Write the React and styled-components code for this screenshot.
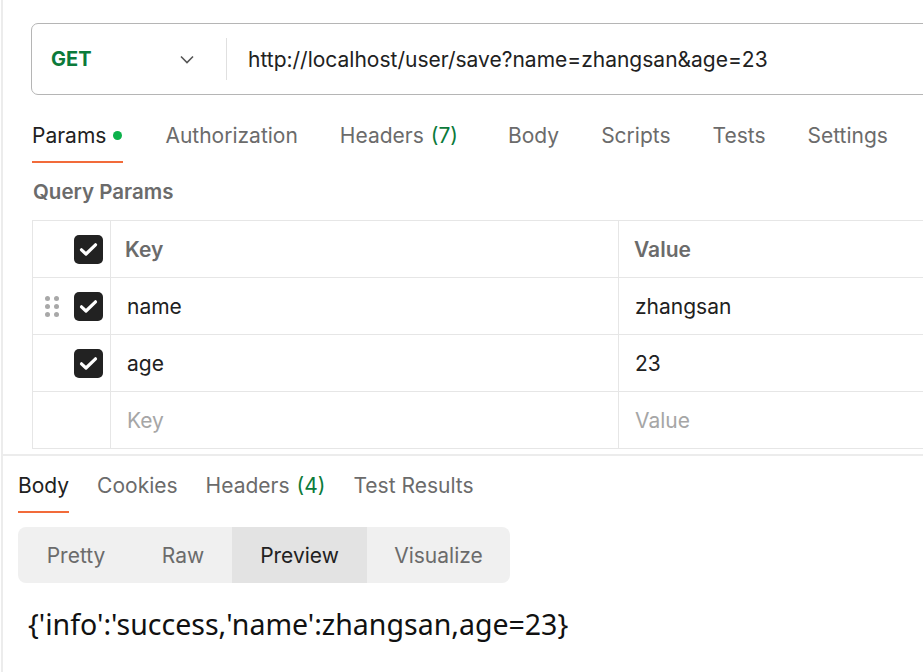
import React from "react";
import styled, { createGlobalStyle } from "styled-components";

const Global = createGlobalStyle`
  html, body { margin: 0; padding: 0; background: #fff; }
  body { font-family: Inter, "Noto Sans", sans-serif; -webkit-font-smoothing: antialiased; }
  * { box-sizing: border-box; }
`;

const Page = styled.div`
  width: 922px;
  height: 672px;
  margin-left: 1px;
  border-left: 2px solid #ececec;
  overflow: hidden;
  display: flex;
  flex-direction: column;
`;

const Request = styled.section`
  padding: 23px 0 0 28px;
  height: 454px;
  flex-shrink: 0;
  display: flex;
  flex-direction: column;
`;

const UrlBar = styled.div`
  width: 1000px;
  height: 72px;
  flex-shrink: 0;
  border: 1px solid #b5b5b5;
  border-radius: 7px;
  display: flex;
  align-items: center;
`;

const Method = styled.div`
  width: 194px;
  padding: 0 32px 0 19px;
  display: flex;
  align-items: center;
  justify-content: space-between;
  font-size: 20px;
  font-weight: 700;
  color: #0b7a3a;
`;

const Divider = styled.div`
  width: 1px;
  height: 42px;
  background: #e0e0e0;
`;

const Url = styled.div`
  padding-left: 21px;
  font-size: 21px;
  color: #212121;
`;

const Tabs = styled.div`
  display: flex;
  gap: ${(p) => p.$gap}px;
  margin-top: ${(p) => p.$top}px;
  margin-left: ${(p) => p.$left || 0}px;
`;

const Tab = styled.div`
  height: 54px;
  display: flex;
  align-items: center;
  gap: 7px;
  font-size: 21px;
  color: ${(p) => (p.$active ? "#212121" : "#6b6b6b")};
  border-bottom: 2px solid ${(p) => (p.$active ? "#f26b3a" : "transparent")};
  white-space: nowrap;
`;

const Count = styled.span`
  color: #0b7a3a;
`;

const Dot = styled.span`
  width: 9px;
  height: 9px;
  border-radius: 50%;
  background: #0cb14b;
  margin-right: 1px;
`;

const SectionTitle = styled.div`
  margin-top: 16px;
  margin-left: 2px;
  font-size: 20.5px;
  font-weight: 600;
  color: #6b6b6b;
  height: 24px;
  line-height: 24px;
`;

const Table = styled.div`
  margin-top: 16px;
  margin-left: 1px;
  width: 1000px;
  border-top: 1px solid #e6e6e6;
  border-left: 1px solid #e6e6e6;
`;

const Row = styled.div`
  display: grid;
  grid-template-columns: 78px 508px 1fr;
  height: 57px;
  border-bottom: 1px solid #e6e6e6;
`;

const Cell = styled.div`
  display: flex;
  align-items: center;
  padding-left: ${(p) => p.$pad || 0}px;
  font-size: 21px;
  font-weight: ${(p) => (p.$head ? 600 : 400)};
  color: ${(p) => (p.$head ? "#6b6b6b" : p.$muted ? "#a6a6a6" : "#212121")};
  border-right: ${(p) => (p.$last ? "none" : "1px solid #e6e6e6")};
`;

const CheckCell = styled(Cell)`
  justify-content: flex-end;
  padding-right: 7px;
  gap: 15px;
  padding-left: 0;
`;

const Box = styled.div`
  width: 29px;
  height: 29px;
  border-radius: 5px;
  background: #222;
  display: flex;
  align-items: center;
  justify-content: center;
`;

const Handle = styled.div`
  display: grid;
  grid-template-columns: 5px 5px;
  gap: 3px 4px;
`;

const HDot = styled.span`
  width: 5px;
  height: 5px;
  border-radius: 50%;
  background: #a8a8a8;
`;

const Sep = styled.div`
  height: 2px;
  flex-shrink: 0;
  background: #ececec;
`;

const Response = styled.section`
  padding: 3px 0 0 15px;
  display: flex;
  flex-direction: column;
`;

const Segments = styled.div`
  margin-top: 14px;
  display: flex;
  width: 492px;
  height: 56px;
  background: #f0f0f0;
  border-radius: 8px;
  overflow: hidden;
`;

const Segment = styled.div`
  display: flex;
  align-items: center;
  justify-content: center;
  width: ${(p) => p.$w}px;
  font-size: 21px;
  color: ${(p) => (p.$active ? "#212121" : "#6b6b6b")};
  background: ${(p) => (p.$active ? "#e3e3e3" : "transparent")};
`;

const Output = styled.div`
  margin-top: 24px;
  margin-left: 10px;
  font-family: "Noto Sans", "Open Sans", sans-serif;
  font-size: 28.5px;
  color: #111;
  line-height: 34px;
`;

const Check = () => (
  <Box>
    <svg width="19" height="15" viewBox="0 0 19 15">
      <path d="M2.5 7.8 L7 12 L16.5 2.8" fill="none" stroke="#fff" strokeWidth="3.2" strokeLinecap="round" strokeLinejoin="round" />
    </svg>
  </Box>
);

const DragHandle = () => (
  <Handle>
    {Array.from({ length: 6 }).map((_, i) => (
      <HDot key={i} />
    ))}
  </Handle>
);

export default function App() {
  return (
    <>
      <Global />
      <Page>
        <Request>
          <UrlBar>
            <Method>
              GET
              <svg width="14" height="9" viewBox="0 0 14 9">
                <path d="M1 1.5 L7 7.5 L13 1.5" fill="none" stroke="#555" strokeWidth="1.6" />
              </svg>
            </Method>
            <Divider />
            <Url>http://localhost/user/save?name=zhangsan&amp;age=23</Url>
          </UrlBar>
          <Tabs $gap={42} $top={14} $left={1}>
            <Tab $active>
              Params <Dot />
            </Tab>
            <Tab>Authorization</Tab>
            <Tab>
              Headers<Count>(7)</Count>
            </Tab>
            <Tab style={{ marginLeft: 8 }}>Body</Tab>
            <Tab>Scripts</Tab>
            <Tab>Tests</Tab>
            <Tab>Settings</Tab>
          </Tabs>
          <SectionTitle style={{ marginTop: 17 }}>Query Params</SectionTitle>
          <Table>
            <Row>
              <CheckCell><Check /></CheckCell>
              <Cell $head $pad={14}>Key</Cell>
              <Cell $head $pad={15} $last>Value</Cell>
            </Row>
            <Row>
              <CheckCell><DragHandle /><Check /></CheckCell>
              <Cell $pad={16}>name</Cell>
              <Cell $pad={16} $last>zhangsan</Cell>
            </Row>
            <Row>
              <CheckCell><Check /></CheckCell>
              <Cell $pad={16}>age</Cell>
              <Cell $pad={16} $last>23</Cell>
            </Row>
            <Row>
              <CheckCell />
              <Cell $pad={16} $muted>Key</Cell>
              <Cell $pad={16} $muted $last>Value</Cell>
            </Row>
          </Table>
        </Request>
        <Sep />
        <Response>
          <Tabs $gap={28} $top={0}>
            <Tab $active>Body</Tab>
            <Tab>Cookies</Tab>
            <Tab>
              Headers<Count>(4)</Count>
            </Tab>
            <Tab>Test Results</Tab>
          </Tabs>
          <Segments>
            <Segment $w={116}>Pretty</Segment>
            <Segment $w={98}>Raw</Segment>
            <Segment $w={135} $active>Preview</Segment>
            <Segment $w={143}>Visualize</Segment>
          </Segments>
          <Output>{"{'info':'success,'name':zhangsan,age=23}"}</Output>
        </Response>
      </Page>
    </>
  );
}
